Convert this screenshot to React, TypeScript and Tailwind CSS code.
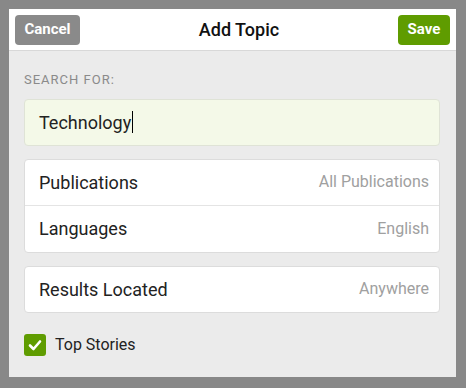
const font = { fontFamily: "Roboto, 'Liberation Sans', sans-serif" };

function Row({ label, value, h, divider }: { label: string; value: string; h: string; divider?: boolean }) {
  return (
    <div className={`flex ${h} items-center justify-between pl-[14px] pr-[10px] ${divider ? "border-b border-[#e4e4e4]" : ""}`}>
      <span className="text-[18px] text-[#222]">{label}</span>
      <span className="text-[16px] text-[#a0a0a0]">{value}</span>
    </div>
  );
}

export default function App() {
  return (
    <div className="h-[388px] w-[466px] bg-[#888888] pl-[9px] pr-[10px] pt-[9px] pb-[11px]" style={font}>
      <div className="flex h-full flex-col bg-[#ebebeb]">
        <div className="flex h-[42px] items-center justify-between border-b border-[#d8d8d8] bg-white px-[6px]">
          <button className="h-[30px] w-[65px] rounded-[4px] bg-[#8a8a8a] text-[15px] font-bold text-white">Cancel</button>
          <span className="text-[18px] font-medium text-[#111]">Add Topic</span>
          <button className="h-[30px] w-[52px] rounded-[4px] bg-[#5f9c00] text-[15px] font-bold text-white">Save</button>
        </div>
        <div className="flex flex-col px-[15px] pr-[16px]">
          <div className="mt-[19px] text-[13px] tracking-[1px] text-[#8a8a8a]">SEARCH FOR:</div>
          <div className="mt-[9px] flex h-[47px] items-center rounded-[4px] border border-[#dfe3d6] bg-[#f4f9e8] px-[14px]">
            <span className="text-[18px] text-[#222]">Technology</span>
            <span className="ml-px h-[22px] w-px bg-black" />
          </div>
          <div className="mt-[13px] rounded-[4px] border border-[#dcdcdc] bg-white">
            <Row label="Publications" value="All Publications" h="h-[46px]" divider />
            <Row label="Languages" value="English" h="h-[46px]" />
          </div>
          <div className="mt-[13px] rounded-[4px] border border-[#dcdcdc] bg-white">
            <Row label="Results Located" value="Anywhere" h="h-[45px]" />
          </div>
          <div className="mt-[20px] flex items-center gap-[9px]">
            <span className="flex h-[22px] w-[22px] items-center justify-center rounded-[3px] bg-[#5f9c00]">
              <svg width="14" height="14" viewBox="0 0 14 14">
                <path d="M2 7.5 L5.5 11 L12 3.5" fill="none" stroke="white" strokeWidth="2.6" strokeLinecap="round" strokeLinejoin="round" />
              </svg>
            </span>
            <span className="text-[16px] text-[#222]">Top Stories</span>
          </div>
        </div>
      </div>
    </div>
  );
}
